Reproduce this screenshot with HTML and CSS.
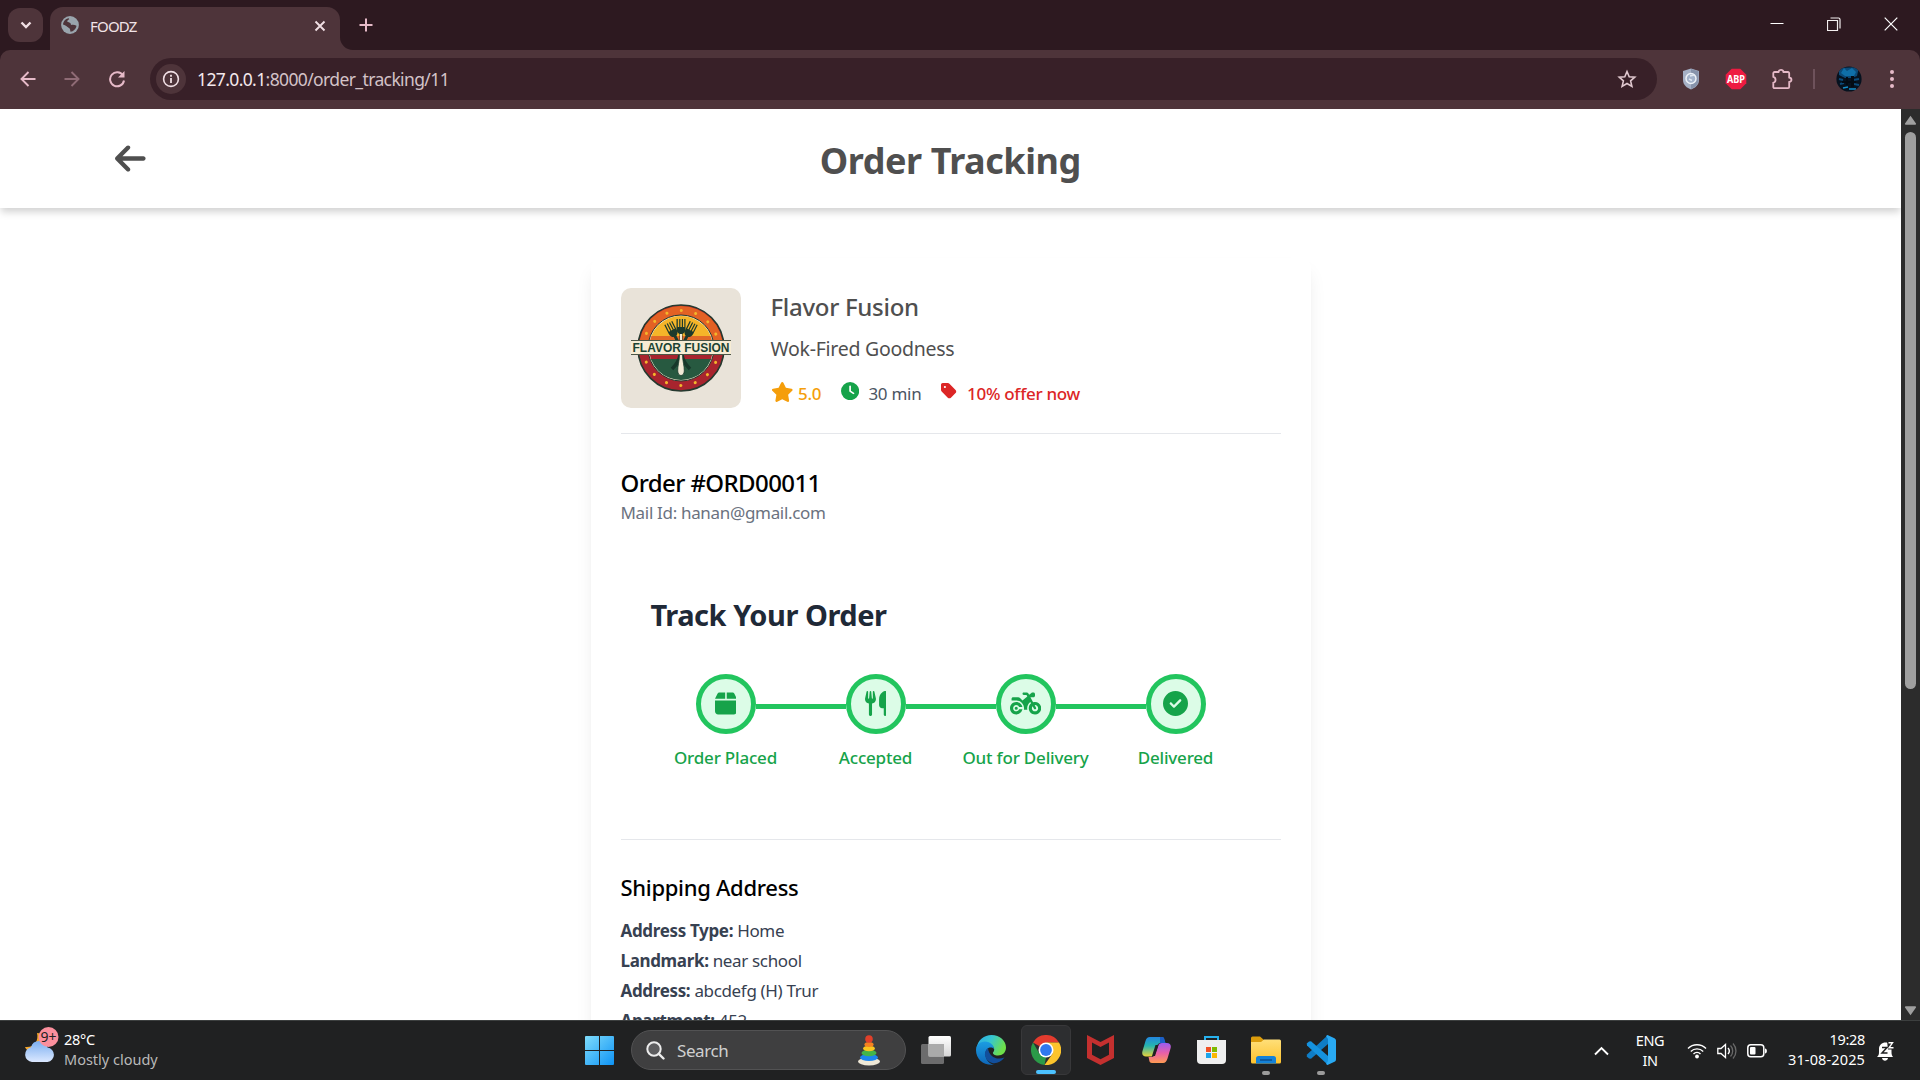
FILE: index.html
```html
<!DOCTYPE html>
<html lang="en">
<head>
<meta charset="utf-8">
<title>FOODZ</title>
<link rel="stylesheet" href="styles.css">
</head>
<body>
<div class="tabstrip">
  <div class="tab-search"><svg width="12" height="8" viewBox="0 0 12 8"><path d="M1.500 1.500 6 6l4.500-4.500" fill="none" stroke="#f1dfe4" stroke-width="2.400"/></svg></div>
  <div class="tab">
    <svg width="18" height="18" viewBox="0 0 18 18"><circle cx="9" cy="9" r="8.900" fill="#9aa5ad"/><path d="M9.500 2c-1.500 2-3 1.500-3.500 3.500 2 .5 4 1 4 3.500 1.500-.5 3.500-.5 5.500.8-.5 3.200-3 5.700-6 6-.5-1.500 0-3-1.500-3.800C6.500 11.500 5 9 2 8.500 2.200 4.800 5.500 2 9.500 2z" fill="#4e343a"/><path d="M8 2.500c3-.8 4 1 5 2.500-1.500 1.500-4 0-5.500.8M3 11c2 0 3.500.6 4 3.500" fill="none" stroke="#9aa5ad" stroke-width="1.600"/></svg>
    <span class="tab-title">FOODZ</span>
    <svg class="tab-close" width="12" height="12" viewBox="0 0 12 12"><path d="M1.500 1.500l9 9M10.500 1.500l-9 9" stroke="#f1dfe4" stroke-width="1.900"/></svg>
  </div>
  <svg class="tab-curve" width="13" height="43" viewBox="0 0 13 43"><path d="M0 30v13h13A13 13 0 0 1 0 30z" fill="#4e343a"/></svg>
  <svg class="new-tab" width="14" height="14" viewBox="0 0 14 14"><path d="M7 .5v13M.5 7h13" stroke="#e6bac8" stroke-width="2"/></svg>
  <div class="window-buttons">
    <svg width="14" height="14" viewBox="0 0 14 14"><path d="M.5 6.500h13" stroke="#fff"/></svg>
    <svg width="14" height="14" viewBox="0 0 14 14"><path d="M.5 3.500h10v10H.5zM3.500 1h8a1.500 1.500 0 0 1 1.500 1.500v9" fill="none" stroke="#f4eff0" stroke-width="1.200"/></svg>
    <svg width="14" height="14" viewBox="0 0 14 14"><path d="M.7.7l12.600 12.600M13.300.7.7 13.300" stroke="#fff" stroke-width="1.200"/></svg>
  </div>
</div>
<div class="toolbar-shell">
<div class="toolbar">
  <div class="nav">
    <svg width="16" height="16" viewBox="0 0 16 16"><path d="M15.500 8H2M8.500 1 1.500 8l7 7" fill="none" stroke="#e6bac8" stroke-width="1.900"/></svg>
    <svg width="16" height="16" viewBox="0 0 16 16"><path d="M.5 8H14M7.500 1l7 7-7 7" fill="none" stroke="#8f6b75" stroke-width="1.900"/></svg>
    <svg width="18" height="18" viewBox="0 0 18 18"><path d="M15 5.500A7 7 0 1 0 16 10.500" fill="none" stroke="#e6bac8" stroke-width="2"/><path d="M16.500 1v6.500H10z" fill="#e6bac8"/></svg>
  </div>
  <div class="omnibox">
    <div class="site-info"><svg width="18" height="18" viewBox="0 0 18 18"><circle cx="9" cy="9" r="7.400" fill="none" stroke="#f1dfe4" stroke-width="1.600"/><path d="M9 8v5M9 4.800v1.900" stroke="#f1dfe4" stroke-width="1.800"/></svg></div>
    <span class="url"><b>127.0.0.1</b>:8000/order_tracking/11</span>
    <svg class="bookmark" width="20" height="20" viewBox="0 0 20 20"><path d="M10 2.500l2.200 5.200 5.600.5-4.200 3.700 1.300 5.500L10 14.500l-4.900 2.900 1.300-5.500L2.200 8.200l5.600-.5z" fill="none" stroke="#e0c8cf" stroke-width="1.600"/></svg>
  </div>
  <div class="extensions">
    <svg width="18" height="22" viewBox="0 0 18 22"><path d="M9 .5l8 2.500v9c0 5-4 8-8 9.500C5 20 1 17 1 12V3z" fill="#a6b1c6"/><path d="M9 1v20c4-1.500 7.500-4.500 7.500-9V3.300z" fill="#8793ab"/><circle cx="9" cy="10.500" r="5" fill="#a3b2ca" stroke="#eef2f8" stroke-width="1.500"/><path d="M8 8l4-1M7 11l3 1.500" stroke="#dfe6f0" stroke-width="1.500"/></svg>
    <svg class="ext-abp" width="22" height="22" viewBox="0 0 22 22"><path d="M6.700.7h8.600l6 6v8.600l-6 6H6.700l-6-6V6.700z" fill="#ee1b41"/><text x="11" y="15" text-anchor="middle" class="abp" textLength="18" lengthAdjust="spacingAndGlyphs">ABP</text></svg>
    <svg class="ext-menu" width="22" height="22" viewBox="0 0 22 22"><path d="M3.500 4H7.500C8 1.200 12 1.200 12.500 4h4.500a1.200 1.200 0 0 1 1.200 1.200V9.500c3 .5 3 4 0 4.500v5a1.200 1.200 0 0 1-1.200 1.200H3.500a1.200 1.200 0 0 1-1.200-1.200v-4.200c3-.8 3-5.300 0-6V5.200A1.200 1.200 0 0 1 3.500 4z" fill="none" stroke="#e6bac8" stroke-width="1.800"/></svg>
    <i class="divider"></i>
    <svg width="26" height="26" viewBox="0 0 26 26"><defs><clipPath id="avatar"><circle cx="13" cy="13" r="12.600"/></clipPath></defs><g clip-path="url(#avatar)"><path d="M0 0h26v26H0z" fill="#06121f"/><path d="M3 2l20-1-2 9-5 2H9L3 9z" fill="#0b4a78"/><path d="M8 2l3 3 5-3 4 4-2 4h-9L5 7z" fill="#0f6fa8"/><path d="M3 13l4 1M17 14l6-1M4 18l4-1M18 18l5 1" stroke="#0b4a78" stroke-width="2"/><path d="M7 22l5-1M13 23h7" stroke="#1490cc" stroke-width="1.500"/><path d="M10 11h2v8h-2zM15 10h3v11h-3zM6 15h14v2H6z" fill="#030b14"/></g></svg>
    <svg class="menu-dots" width="4" height="20" viewBox="0 0 4 20"><circle cx="2" cy="3" r="2" fill="#e6bac8"/><circle cx="2" cy="10" r="2" fill="#e6bac8"/><circle cx="2" cy="17" r="2" fill="#e6bac8"/></svg>
  </div>
</div>
</div>

<div class="viewport">
  <main class="page">
    <header class="page-header">
      <svg width="30.600" height="35" viewBox="0 0 448 512" fill="#4f4f4f"><path d="M9.400 233.400c-12.500 12.500-12.500 32.800 0 45.300l160 160c12.500 12.500 32.800 12.500 45.300 0s12.500-32.800 0-45.300L109.200 288 416 288c17.700 0 32-14.300 32-32s-14.300-32-32-32l-306.700 0L214.600 118.600c12.500-12.500 12.500-32.800 0-45.300s-32.800-12.500-45.300 0l-160 160z"/></svg>
      <h1>Order Tracking</h1>
    </header>
    <section class="card">
      <div class="restaurant">
        <svg class="logo" width="120" height="120" viewBox="0 0 120 120">
          <defs><clipPath id="inner"><circle cx="60" cy="60" r="32"/></clipPath><clipPath id="top"><path d="M0 0h120v60H0z"/></clipPath></defs>
          <path d="M0 0h120v120H0z" fill="#e9e3d9"/>
          <circle cx="60" cy="60" r="43" fill="#a8242e" stroke="#25392f" stroke-width="1.600"/>
          <circle cx="60" cy="60" r="42" fill="#e36124" clip-path="url(#top)"/>
          <circle cx="60" cy="60" r="37.500" fill="none" stroke="#f3b52b" stroke-width="3" stroke-linecap="round" stroke-dasharray=".1 14.626"/>
          <circle cx="60" cy="60" r="33" fill="#eadfc4" stroke="#25392f" stroke-width="1"/>
          <g clip-path="url(#inner)"><path d="M20 20h80v28H20z" fill="#f5b529"/><path d="M20 48h80v12H20z" fill="#e26a27"/><path d="M20 60h80v12H20z" fill="#a8242e"/><path d="M20 71h80v30H20z" fill="#275940"/></g>
          <g fill="#1d3a2c"><path id="fork" d="M55.500 31h1.300v8h1.400v-8h1.200v8h1.400v-8h1.200v8h1.300v-8h1.200v10c0 3-1.500 4-3 5v7h-3v-7c-1.500-1-3-2-3-5z"/><use href="#fork" transform="rotate(-27 60 60) translate(0 1)"/><use href="#fork" transform="rotate(27 60 60) translate(0 1)"/></g>
          <path d="M60 46v8" stroke="#f2ead6" stroke-width="2"/>
          <path d="M59 67c-1 7-5 11-8 14M61 67c1 7 5 11 8 14" stroke="#17382a" stroke-width="3.500" fill="none"/>
          <path d="M58.500 66h3c0 7 2 12 1.800 17-.3 6-6.300 6-6.600 0-.2-5 1.800-10 1.800-17z" fill="#f2ead6" stroke="#17382a" stroke-width=".8"/>
          <path d="M10 52h100v15H10z" fill="#f7ecd4"/><path d="M10 52.500h100M10 66.500h100" stroke="#4c5647" stroke-width="1"/>
          <text x="60" y="64" text-anchor="middle" class="logo-text" textLength="97" lengthAdjust="spacingAndGlyphs">FLAVOR FUSION</text>
        </svg>
        <div class="restaurant-info">
          <h2>Flavor Fusion</h2>
          <p class="tagline">Wok-Fired Goodness</p>
          <div class="facts">
            <svg width="22.500" height="20" viewBox="0 0 576 512" fill="#f59e0b"><path d="M316.900 18C311.600 7 300.400 0 288.100 0s-23.400 7-28.800 18L195 150.300 51.400 171.500c-12 1.800-22 10.200-25.700 21.700s-.7 24.200 7.900 32.700L137.800 329 113.200 474.700c-2 12 3 24.200 12.900 31.300s23 8 33.800 2.300l128.300-68.500 128.300 68.500c10.800 5.700 23.900 4.900 33.800-2.300s14.900-19.300 12.900-31.300L438.500 329 542.700 225.900c8.600-8.500 11.700-21.200 7.900-32.700s-13.700-19.900-25.700-21.700L381.200 150.300 316.900 18z"/></svg>
            <span class="rating">5.0</span>
            <svg width="18.200" height="18.200" viewBox="0 0 512 512" fill="#16a34a"><path d="M256 0a256 256 0 1 1 0 512A256 256 0 1 1 256 0zM232 120V256c0 8 4 15.500 10.700 20l96 64c11 7.400 25.900 4.400 33.300-6.700s4.400-25.900-6.700-33.300L280 243.200V120c0-13.300-10.700-24-24-24s-24 10.700-24 24z"/></svg>
            <span class="time">30 min</span>
            <svg width="15.600" height="17.800" viewBox="0 0 448 512" fill="#dc2626"><path d="M0 80V229.500c0 17 6.700 33.300 18.700 45.300l176 176c25 25 65.500 25 90.500 0L418.700 317.300c25-25 25-65.500 0-90.500l-176-176c-12-12-28.300-18.700-45.300-18.700H48C21.500 32 0 53.500 0 80zm112 32a32 32 0 1 1 0 64 32 32 0 1 1 0-64z"/></svg>
            <span class="offer">10% offer now</span>
          </div>
        </div>
      </div>
      <div class="order">
        <h2 class="order-number">Order #ORD00011</h2>
        <p>Mail Id: hanan@gmail.com</p>
        <div class="tracking">
          <h2>Track Your Order</h2>
          <div class="steps">
            <div class="step"><div class="dot"><svg width="21.900" height="25" viewBox="0 0 448 512"><path d="M50.700 58.500L0 160H208V32H93.700C75.500 32 58.900 42.300 50.700 58.500zM240 160H448L397.300 58.500C389.100 42.300 372.500 32 354.300 32H240V160zm208 32H0V416c0 35.300 28.700 64 64 64H384c35.300 0 64-28.700 64-64V192z"/></svg></div><span class="label">Order Placed</span></div>
            <i class="connector"></i>
            <div class="step"><div class="dot"><svg width="21.900" height="25" viewBox="0 0 448 512"><path d="M416 0C400 0 288 32 288 176V288c0 35.300 28.700 64 64 64h32V480c0 17.700 14.300 32 32 32s32-14.300 32-32V352 240 32c0-17.700-14.300-32-32-32zM64 16C64 7.800 57.900 1 49.700 .1S34.200 4.600 32.400 12.500L2.100 148.800C.7 155.100 0 161.500 0 167.900c0 45.900 35.100 83.600 80 87.700V480c0 17.700 14.300 32 32 32s32-14.300 32-32V255.600c44.900-4.100 80-41.800 80-87.700c0-6.400-.7-12.800-2.100-19.100L191.600 12.500c-1.800-8-9.300-13.300-17.400-12.400S160 7.800 160 16V150.200c0 5.400-4.400 9.800-9.800 9.800c-5.100 0-9.300-3.900-9.800-9L127.900 14.600C127.200 6.300 120.300 0 112 0s-15.200 6.300-15.900 14.600L83.700 151c-.5 5.100-4.700 9-9.800 9c-5.400 0-9.800-4.400-9.800-9.800V16z"/></svg></div><span class="label">Accepted</span></div>
            <i class="connector"></i>
            <div class="step"><div class="dot"><svg width="31.250" height="25" viewBox="0 0 640 512"><path d="M280 32c-13.300 0-24 10.700-24 24s10.700 24 24 24h57.700l16.400 30.300L256 192l-45.300-45.300c-12-12-28.300-18.700-45.300-18.700H64c-17.700 0-32 14.300-32 32v32h96c88.400 0 160 71.600 160 160c0 11-1.100 21.700-3.200 32h70.400c-2.100-10.300-3.200-21-3.200-32c0-52.200 25-98.600 63.700-127.800l15.400 28.600C402.400 276.300 384 312 384 352c0 70.700 57.300 128 128 128s128-57.300 128-128s-57.300-128-128-128c-13.500 0-26.500 2.100-38.700 6L418.200 128H480c17.700 0 32-14.300 32-32V64c0-17.700-14.300-32-32-32H459.600c-7.500 0-14.700 2.600-20.500 7.400L391.700 78.900l-14-26c-7-12.900-20.500-21-35.200-21H280zM462.700 311.200l28.200 52.200c6.300 11.700 20.900 16 32.500 9.700s16-20.900 9.700-32.500l-28.200-52.200c2.300-.3 4.700-.4 7.100-.4c35.300 0 64 28.700 64 64s-28.700 64-64 64s-64-28.700-64-64c0-15.500 5.500-29.700 14.700-40.800zM187.300 376c-9.500 23.500-32.500 40-59.300 40c-35.300 0-64-28.700-64-64s28.700-64 64-64c26.900 0 49.900 16.500 59.300 40h66.400C242.500 268.800 190.500 224 128 224C57.300 224 0 281.300 0 352s57.300 128 128 128c62.500 0 114.500-44.800 125.800-104H187.300zM128 384a32 32 0 1 0 0-64 32 32 0 1 0 0 64z"/></svg></div><span class="label">Out for Delivery</span></div>
            <i class="connector"></i>
            <div class="step"><div class="dot"><svg width="25" height="25" viewBox="0 0 512 512"><path d="M256 512A256 256 0 1 0 256 0a256 256 0 1 0 0 512zM369 209L241 337c-9.400 9.400-24.600 9.400-33.900 0l-64-64c-9.400-9.400-9.400-24.600 0-33.900s24.600-9.400 33.900 0l47 47L335 175c9.400-9.400 24.600-9.400 33.900 0s9.400 24.600 0 33.900z"/></svg></div><span class="label">Delivered</span></div>
          </div>
        </div>
      </div>
      <div class="shipping">
        <h3>Shipping Address</h3>
        <p><b>Address Type:</b> Home</p>
        <p><b>Landmark:</b> near school</p>
        <p><b>Address:</b> abcdefg (H) Trur</p>
        <p><b>Apartment:</b> 452</p>
      </div>
    </section>
  </main>
  <div class="scrollbar">
    <svg width="13" height="10" viewBox="0 0 13 10"><path d="M6.500.8 12 8.500a.8.800 0 0 1-.7 1.200H1.700A.8.800 0 0 1 1 8.500z" fill="#9f9f9f"/></svg>
    <div class="thumb"></div>
    <svg width="13" height="10" viewBox="0 0 13 10"><path d="M6.500 9.200 12 1.500a.8.800 0 0 0-.7-1.200H1.700A.8.800 0 0 0 1 1.500z" fill="#9f9f9f"/></svg>
  </div>
</div>

<div class="taskbar">
  <div class="weather">
    <svg width="36" height="38" viewBox="0 0 36 38"><defs><linearGradient id="cloud" x2="0" y2="1"><stop stop-color="#7aaef0"/><stop offset="1" stop-color="#dbe8ff"/></linearGradient></defs><path d="M13 6c2 8-3 15-12 14 2 5 9 7 14 4s7-10 4-15c-1-2-3-3-6-3z" fill="#f3a52c"/><path d="M8 35a7.500 7.500 0 0 1-1-14.800 8.500 8.500 0 0 1 16.500.3A7.300 7.300 0 0 1 23.500 35z" fill="url(#cloud)"/><circle cx="24.500" cy="10" r="10" fill="#fb8f9d"/><text x="24.500" y="15.300" text-anchor="middle" class="badge" textLength="16" lengthAdjust="spacingAndGlyphs">9+</text></svg>
    <div class="weather-text"><span class="temp">28°C</span><span class="muted">Mostly cloudy</span></div>
  </div>
  <div class="apps">
    <div class="app start"><svg width="29" height="29" viewBox="0 0 29 29"><defs><linearGradient id="win" x2="1" y2="1"><stop stop-color="#7fdcfb"/><stop offset="1" stop-color="#0e93f5"/></linearGradient></defs><path d="M0 1a1 1 0 0 1 1-1h13v14H0zM15 0h13a1 1 0 0 1 1 1v13H15zM0 15h14v14H1a1 1 0 0 1-1-1zM15 15h14v13a1 1 0 0 1-1 1H15z" fill="url(#win)"/></svg></div>
    <div class="search">
      <svg width="19" height="19" viewBox="0 0 19 19"><circle cx="8" cy="8" r="6.700" fill="#5d5d5f" stroke="#ececec" stroke-width="2"/><path d="M12.800 12.800l4.700 4.700" stroke="#ececec" stroke-width="2.400" stroke-linecap="round"/></svg>
      <span class="placeholder">Search</span>
      <svg width="22" height="31" viewBox="0 0 22 31"><ellipse cx="11" cy="26.500" rx="11" ry="4" fill="#efe8d6"/><ellipse cx="11" cy="22.500" rx="9" ry="3.500" fill="#1d86ee"/><ellipse cx="11" cy="18" rx="7.500" ry="3.200" fill="#43b54a"/><ellipse cx="11" cy="13.500" rx="6" ry="2.800" fill="#f8c51f"/><ellipse cx="11" cy="9.500" rx="4.600" ry="2.500" fill="#f58220"/><circle cx="11" cy="4" r="3.800" fill="#e0402a"/></svg>
    </div>
    <div class="app"><svg width="30" height="28" viewBox="0 0 30 28"><defs><linearGradient id="tv" x2="0" y2="1"><stop stop-color="#fff"/><stop offset="1" stop-color="#d5d5d5"/></linearGradient></defs><rect y="8" width="23" height="20" rx="1.500" fill="#6c6c6d"/><rect x="7.500" width="22.500" height="20.500" rx="1.500" fill="url(#tv)"/><path d="M7.500 8H23v12.500H7.500z" fill="#aaa"/></svg></div>
    <div class="app"><svg width="30" height="30" viewBox="0 0 30 30"><defs><linearGradient id="e1" x2="1" y2=".4"><stop stop-color="#2aa8e8"/><stop offset=".5" stop-color="#36c6d0"/><stop offset="1" stop-color="#6ee04a"/></linearGradient><linearGradient id="e2" x2="0" y2="1"><stop stop-color="#1b9de2"/><stop offset="1" stop-color="#0e66b8"/></linearGradient></defs><path d="M.5 13C2 5 8 0 15.500 0 24 0 30 6 30 12.500c0 5-3.500 8-8 8-3.500 0-5.500-1.500-5-3 2-2 1.500-5-1-7C11 7.500 4 8.500.5 13z" fill="url(#e1)"/><path d="M0 15c0-5 4-8.500 9-8.500 5.500 0 9 4 9 7.500-3-3-8-1-8.500 4C9 24 13 29 18 29.700 8 31 0 24.500 0 15z" fill="url(#e2)"/><path d="M12 13c-4 3-4.500 9.500 1 13.500 5 3.500 11 1.500 15.500-4-8 3-15.500-.5-16.500-9.500z" fill="#124f9c"/></svg></div>
    <div class="app active"><svg width="30" height="30" viewBox="0 0 30 30"><path d="M15 15 2 7.500A15 15 0 0 1 28 7.500H15z" fill="#e33b2e"/><path d="M2 7.500 8.500 18.700 15 22.500 13.500 30A15 15 0 0 1 2 7.500z" fill="#2b9a48"/><path d="M28 7.500A15 15 0 0 1 13.500 30L21.500 18.700 20 10 15 7.500z" fill="#fcc42c"/><circle cx="15" cy="15" r="7.500" fill="#fff"/><circle cx="15" cy="15" r="5.900" fill="#2f78ee"/></svg><i class="indicator"></i></div>
    <div class="app mcafee"><svg width="27" height="30" viewBox="0 0 27 30"><path d="M0 0l13.500 7L27 0v23l-13.500 7L0 23zM5 7.500v12.300l8.500 4.400 8.500-4.400V7.500l-8.500 4.600z" fill="#c4302f"/></svg></div>
    <div class="app"><svg width="29" height="26" viewBox="0 0 29 26"><defs><linearGradient id="c1" x2="0" y2="1"><stop stop-color="#2386e0"/><stop offset=".45" stop-color="#25b5b0"/><stop offset="1" stop-color="#e9d23a"/></linearGradient><linearGradient id="c2" x2="0" y2="1"><stop stop-color="#9a5cf0"/><stop offset=".5" stop-color="#e95fa8"/><stop offset="1" stop-color="#ff9b52"/></linearGradient></defs><path d="M8 0h12c2 0 2 3 3.500 6H19c-3 0-4 2-5 5l-2 6c-.7 2-2 2.500-4 2.500H4c-3 0-4.500-2-3.500-5.500l3-10C4.300 1.500 5.500 0 8 0z" fill="url(#c1)"/><path d="M21 26H10c-3 0-2.500-3-3.500-6H9c3 0 4-2 5-5l2-6c.7-2 2-3 4-3h5c3 0 4.500 2 3.500 5.500l-3 10c-.8 2.500-2 4.500-4.500 4.500z" fill="url(#c2)"/><path d="M18 0h2.500c2 0 2 3 3 6H18z" fill="#1c5fc7"/><path d="M13.500 8h3l-3.500 11h-3z" fill="#202122"/></svg></div>
    <div class="app"><svg width="29" height="30" viewBox="0 0 29 30"><path d="M8 6V2h13v4" fill="none" stroke="#27b2ee" stroke-width="2"/><path d="M0 5h29v20a4 4 0 0 1-4 4H4a4 4 0 0 1-4-4z" fill="#efefef"/><path d="M9 12h5v5H9z" fill="#f05024"/><path d="M15 12h5v5h-5z" fill="#7fba00"/><path d="M9 18h5v5H9z" fill="#1ba5ea"/><path d="M15 18h5v5h-5z" fill="#fbb701"/></svg></div>
    <div class="app"><svg width="30" height="28" viewBox="0 0 30 28"><defs><linearGradient id="fd" x2="0" y2="1"><stop stop-color="#ffdf79"/><stop offset="1" stop-color="#fdc22d"/></linearGradient></defs><path d="M0 2a1.500 1.500 0 0 1 1.500-1.500H9l4 3.500v6H0z" fill="#dc9d0c"/><path d="M0 6h10l3-2.500h15.500A1.500 1.500 0 0 1 30 5v21a1.500 1.500 0 0 1-1.500 1.500h-27A1.500 1.500 0 0 1 0 26z" fill="url(#fd)"/><path d="M5 27.500V22.500a2.500 2.500 0 0 1 2.500-2.500h15a2.500 2.500 0 0 1 2.500 2.500v5z" fill="#1482d8"/><path d="M9 24h12" stroke="#0b4f92" stroke-width="1.500"/></svg><i class="indicator idle"></i></div>
    <div class="app"><svg width="30" height="30" viewBox="0 0 30 30"><path d="M22 0 1 19.500l-.3 2L3 23.500l2 .2L22 9z" fill="#0f7dc6"/><path d="M22 30 1 10.500l-.3-2L3 6.500l2-.2L22 21z" fill="#1592df"/><path d="M21.500 0l7 3.200A2.500 2.500 0 0 1 30 5.500v19a2.500 2.500 0 0 1-1.500 2.300L21.500 30 20 29 22 26V4l-2-3z" fill="#29aaf4"/></svg><i class="indicator idle"></i></div>
  </div>
  <div class="tray">
    <svg width="15" height="10" viewBox="0 0 15 10"><path d="M1 8.500l6.500-6.500L14 8.500" fill="none" stroke="#fff" stroke-width="1.900"/></svg>
    <div class="lang"><span>ENG</span><span>IN</span></div>
    <div class="status">
      <svg width="20" height="16" viewBox="0 0 20 16"><path d="M1 5.500a12.800 12.800 0 0 1 18 0M3.800 8.400a8.800 8.800 0 0 1 12.400 0M6.500 11a5 5 0 0 1 7 0" fill="none" stroke="#fff" stroke-width="1.400"/><circle cx="10" cy="13.500" r="1.900" fill="#fff"/></svg>
      <svg width="20" height="18" viewBox="0 0 20 18"><path d="M.8 6.500v5H4l4.500 4V2.500L4 6.500z" fill="none" stroke="#fff" stroke-width="1.300"/><path d="M11 6a4.500 4.500 0 0 1 0 6" fill="none" stroke="#fff" stroke-width="1.400"/><path d="M13.500 3.500a8 8 0 0 1 0 11M16 1.500a11 11 0 0 1 0 15" fill="none" stroke="#696969" stroke-width="1.300"/></svg>
      <svg width="20" height="14" viewBox="0 0 20 14"><rect x=".8" y=".8" width="16" height="12" rx="3" fill="none" stroke="#fff" stroke-width="1.500"/><rect x="3" y="3" width="5.500" height="7.600" rx="1" fill="#fff"/><path d="M18 4.500c2.500 0 2.500 5 0 5z" fill="#fff"/></svg>
    </div>
    <div class="clock"><span class="hour">19:28</span><span class="date">31-08-2025</span></div>
    <svg width="17" height="20" viewBox="0 0 17 20"><path d="M0 16c1.500-1.200 2-2.500 2-5V8c0-4 3-6.500 6.500-6.500S14.500 4 14.500 8v3c0 2.500.5 3.800 1.500 5zM5 17h6c-.5 3.500-5.500 3.500-6 0z" fill="#fff"/><path d="M10 0h7v8.500h-6z" fill="#202122"/><path d="M5 6.500h5l-5 5.500h5.500" fill="none" stroke="#202122" stroke-width="1.500"/><path d="M11.500 1.800h4L12 6.800h4.500" fill="none" stroke="#fff" stroke-width="1.400"/></svg>
  </div>
</div>
</body>
</html>
```
FILE: styles.css
```css
* { box-sizing: border-box; margin: 0; padding: 0; }
html, body { height: 100%; overflow: hidden; }
body {
  display: flex; flex-direction: column;
  width: 1920px; height: 1080px;
  font-family: "Noto Sans", "Open Sans", sans-serif;
  background: #fff;
}
svg { display: block; flex: none; }

/* Browser tab strip */
.tabstrip { display: flex; flex: none; height: 50px; padding: 7px 0 0 8px; background: #2d1920; }
.tab-search { display: flex; align-items: center; justify-content: center; width: 35px; height: 34px; margin-top: 1px; border-radius: 12px; background: #4e343a; }
.tab { display: flex; align-items: center; width: 290px; height: 43px; margin-left: 7px; padding: 0 14px 7px 11px; border-radius: 13px 13px 0 0; background: #4e343a; color: #f1e3e7; font-size: 15px; }
.tab-title { flex: 1; margin: 1px 0 0 11px; letter-spacing: -.8px; }
.tab-close { margin-top: 1px; }
.new-tab { margin: 11px 0 0 6px; }
.window-buttons { display: flex; gap: 43px; margin: 10px 22px 0 auto; }

/* Browser toolbar */
.toolbar-shell { flex: none; height: 59px; background: #2d1920; }
.toolbar { display: flex; align-items: center; height: 59px; padding: 0 26px 2px 20px; border-radius: 10px 10px 0 0; background: #4e343a; }
.nav { display: flex; align-items: center; gap: 28px; width: 130px; }
.omnibox { display: flex; align-items: center; width: 1507px; height: 42px; padding: 0 20px 0 6px; border-radius: 21px; background: #382028; color: #d3c2c7; }
.site-info { display: flex; align-items: center; justify-content: center; width: 30px; height: 30px; border-radius: 50%; background: #4e343a; }
.url { flex: 1; margin: 1px 0 0 11px; font-size: 17.5px; letter-spacing: -.62px; }
.url b { font-weight: 400; color: #f4e8ec; }
.extensions { display: flex; align-items: center; flex: 1; padding-left: 25px; }
.ext-abp { margin-left: 25px; }
.ext-menu { margin-left: 24px; }
.divider { width: 2px; height: 20px; margin: 0 21px 0 20px; background: #6e525b; }
.menu-dots { margin-left: auto; }
.abp { font: 700 10px "Noto Sans", sans-serif; fill: #fff; }

/* Page area */
.viewport { display: flex; flex: none; height: 911px; overflow: hidden; }
.page { width: 1901px; background: #fff; }
.page-header { display: flex; align-items: center; height: 99px; padding: 0 114px 0 115px; box-shadow: 0 5px 7.5px -1.250px rgba(0, 0, 0, .18); }
.page-header h1 { flex: 1; margin-right: 32px; padding-top: 4px; text-align: center; font-size: 36px; line-height: 45px; letter-spacing: -.45px; color: #4f4f4f; }
.scrollbar { display: flex; flex-direction: column; align-items: center; width: 19px; padding: 6px 0 4px; background: #2c2c2c; }
.thumb { width: 11px; height: 557px; margin: 7px 0 auto; border-radius: 6px; background: #9f9f9f; }

/* Order card */
.card { width: 720px; height: 1100px; margin: 50px auto 0; padding: 30px; border-radius: 10px; box-shadow: 0 12px 19px -4px rgba(0, 0, 0, .1), 0 5px 7.500px -5px rgba(0, 0, 0, .1); }
h2, h3 { font-weight: 500; font-size: 24px; line-height: 35px; letter-spacing: -.3px; }
.restaurant { display: flex; gap: 30px; height: 146px; border-bottom: 1px solid #e5e7eb; color: #4f4f4f; }
.restaurant-info { padding-top: 1px; }
.logo { border-radius: 10px; }
.logo-text { font: 700 13px "Liberation Sans", sans-serif; fill: #1c4333; }
.tagline { margin-top: 10px; font-size: 19.500px; line-height: 30px; letter-spacing: -.26px; }
.facts { display: flex; align-items: flex-start; height: 25px; margin-top: 17px; font-size: 17px; line-height: 25px; letter-spacing: -.28px; }
.facts svg { margin-top: 1px; }
.rating { margin: 0 20px 0 5px; color: #f59e0b; font-weight: 500; }
.time { margin: 0 20px 0 9px; color: #4b5563; }
.offer { margin-left: 10px; color: #dc2626; font-weight: 500; }
.order { height: 406px; padding-top: 31px; border-bottom: 1px solid #e5e7eb; color: #000; }
.order-number { letter-spacing: -.6px; }
.order > p { font-size: 17px; line-height: 25px; letter-spacing: -.32px; color: #6b7280; }
.tracking { padding: 70px 30px 0; }
.tracking h2 { font-size: 29px; font-weight: 700; line-height: 40px; letter-spacing: -.48px; color: #1f2937; }
.steps { display: flex; margin: 39px 15px 0; padding-left: 30px; }
.step { display: flex; flex-direction: column; align-items: center; width: 60px; gap: 11px; }
.dot { display: flex; align-items: center; justify-content: center; width: 60px; height: 60px; padding-bottom: 1px; border: 5px solid #22c55e; border-radius: 50%; background: #dcfce7; fill: #16a34a; }
.label { font-size: 17px; font-weight: 500; line-height: 25px; letter-spacing: -.2px; color: #16a34a; white-space: nowrap; }
.connector { width: 90px; height: 5px; margin-top: 30px; background: #22c55e; }
.shipping { padding-top: 30px; }
.shipping h3 { margin-bottom: 11px; font-size: 22px; }
.shipping p { font-size: 17px; line-height: 30px; letter-spacing: -.34px; color: #374151; }

/* Windows taskbar */
.taskbar { display: flex; flex: none; height: 60px; border-top: 1px solid #3c3f3f; background: #202122; color: #fff; font-size: 14.500px; line-height: 20px; }
.weather { display: flex; width: 574px; padding: 6px 0 0 24px; }
.weather-text { display: flex; flex-direction: column; align-items: flex-start; margin: 2px 0 0 4px; }
.temp { letter-spacing: -.24px; }
.muted { color: #b9b9b9; }
.badge { font: 14.500px "Noto Sans", sans-serif; fill: #222; }
.apps { display: flex; align-items: center; height: 58px; gap: 5px; }
.app { display: flex; position: relative; align-items: center; justify-content: center; width: 50px; height: 50px; }
.mcafee { padding-right: 1px; }
.active { border: 1px solid #38383a; border-radius: 6px; background: #2d2e30; }
.indicator { position: absolute; bottom: 0; width: 8px; height: 4px; border-radius: 2px; background: #4cc2ff; }
.active .indicator { width: 20px; }
.indicator.idle { background: #9b9b9b; }
.search { display: flex; align-items: center; width: 275px; height: 40px; margin-left: 2px; padding: 0 25px 0 14px; border: 1px solid #525253; border-radius: 20px; background: #3f3f40; color: #d0d0d0; font-size: 17px; }
.placeholder { margin: 1px auto 0 12px; letter-spacing: -.4px; }
.tray { display: flex; align-items: center; margin-left: auto; padding-right: 26px; }
.lang { display: flex; flex-direction: column; align-items: center; width: 30px; margin: 0 0 2px 26px; letter-spacing: -.38px; }
.status { display: flex; align-items: center; gap: 10px; margin: 0 0 0 22px; }
.clock { display: flex; flex-direction: column; align-items: flex-end; width: 84px; margin: 0 12px 4px 14px; }
.hour { letter-spacing: -.3px; }
.date { letter-spacing: .13px; }
```
